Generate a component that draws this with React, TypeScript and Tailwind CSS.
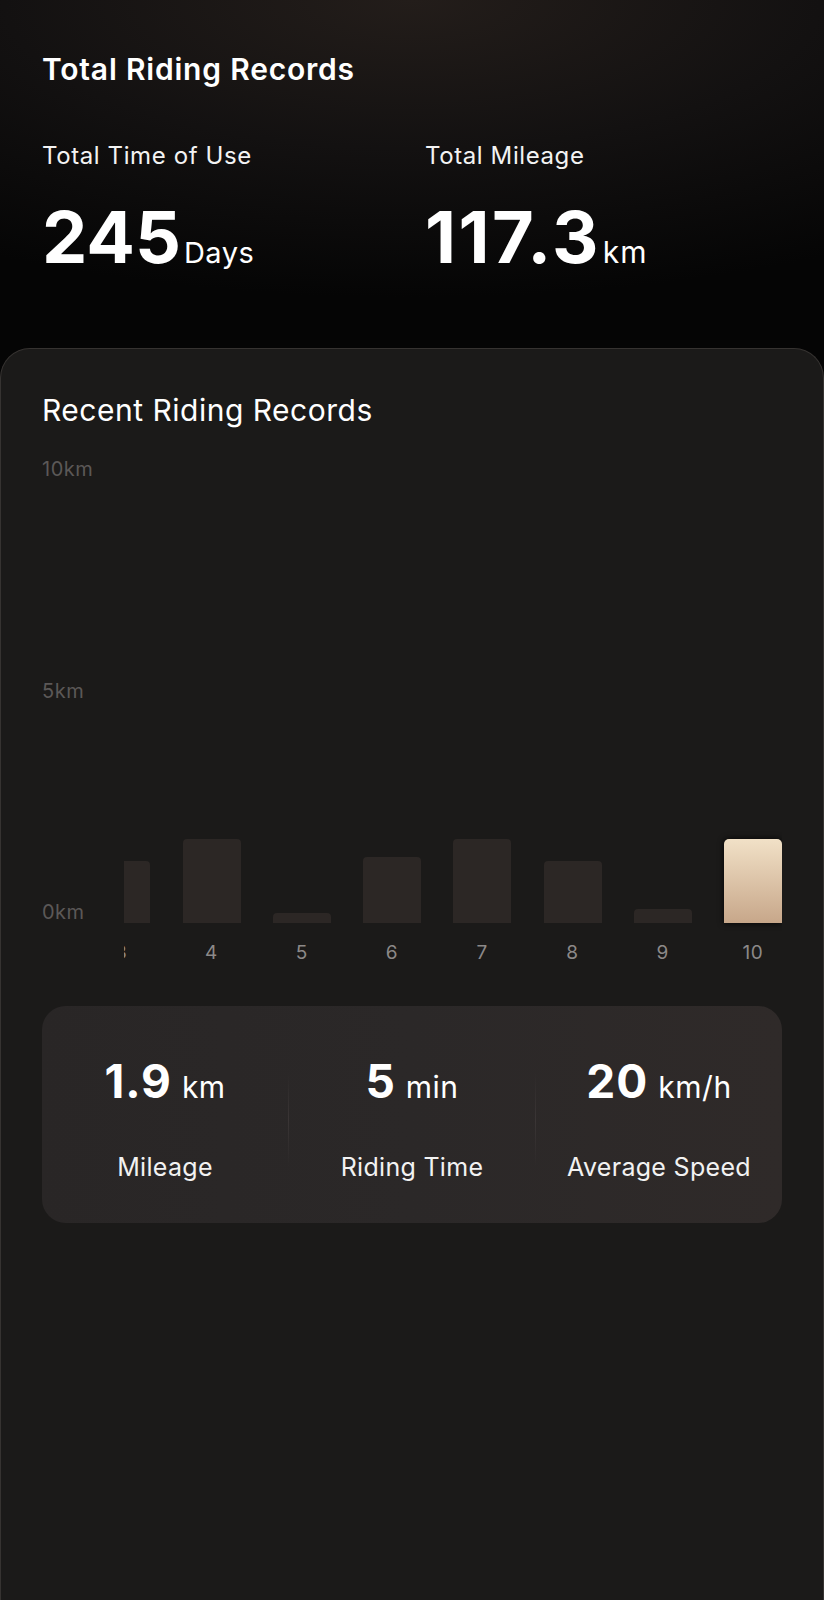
import React from "react";

type Bar = { day: number; km: number; active?: boolean };

const bars: Bar[] = [
  { day: 1, km: 1.2 },
  { day: 2, km: 0.8 },
  { day: 3, km: 1.4 },
  { day: 4, km: 1.9 },
  { day: 5, km: 0.22 },
  { day: 6, km: 1.5 },
  { day: 7, km: 1.9 },
  { day: 8, km: 1.4 },
  { day: 9, km: 0.32 },
  { day: 10, km: 1.9, active: true },
];

const PX_PER_KM = 44.3;

function Stat({ value, unit, label }: { value: string; unit: string; label: string }) {
  return (
    <div className="flex flex-1 flex-col items-center">
      <div className="flex items-baseline gap-[10px] text-white">
        <span className="text-[46px] font-bold leading-none tracking-[1px]">{value}</span>
        <span className="text-[30px] leading-none tracking-[0.5px]">{unit}</span>
      </div>
      <div className="mt-[48px] text-[25px] leading-[30px] tracking-[0.3px] text-[#f2f2f2]">{label}</div>
    </div>
  );
}

function Divider() {
  return <div className="h-[94px] w-px self-center bg-gradient-to-b from-transparent via-[#3a3535] to-transparent" />;
}

export default function App() {
  return (
    <div className="min-h-[1600px] bg-[#050505] font-['Inter',sans-serif] text-white">
      <section className="h-[348px] bg-[radial-gradient(110%_95%_at_50%_0%,#231d1a_0%,#131111_45%,#050505_90%)] px-[42px] pt-[51px]">
        <h1 className="text-[30px] font-semibold leading-[36px] tracking-[0.8px]">Total Riding Records</h1>
        <div className="mt-[54px] flex">
          <div className="w-[383px]">
            <div className="text-[24px] leading-[30px] tracking-[0.6px] text-[#f3f3f3]">Total Time of Use</div>
            <div className="mt-[30px] flex items-baseline">
              <span className="text-[72px] font-bold leading-[72px]">245</span>
              <span className="ml-[3px] text-[29px] leading-none tracking-[0.5px]">Days</span>
            </div>
          </div>
          <div>
            <div className="text-[24px] leading-[30px] tracking-[0.6px] text-[#f3f3f3]">Total Mileage</div>
            <div className="mt-[30px] flex items-baseline">
              <span className="text-[72px] font-bold leading-[72px] tracking-[2.4px]">117.3</span>
              <span className="ml-[2px] text-[30px] leading-none tracking-[1px]">km</span>
            </div>
          </div>
        </div>
      </section>

      <section className="min-h-[1252px] rounded-t-[30px] border border-b-0 border-[#363331] bg-[#1b1a19] px-[41px] pt-[44px]">
        <h2 className="text-[30px] leading-[34px] tracking-[0.5px] text-white">Recent Riding Records</h2>

        <div className="mt-[31px] flex">
          <div className="flex h-[465px] w-[82px] shrink-0 flex-col justify-between text-[20px] leading-[22px] tracking-[0.5px] text-[#5b5857]">
            <span>10km</span>
            <span>5km</span>
            <span>0km</span>
          </div>
          <div className="flex-1 overflow-hidden">
            <div className="flex justify-end gap-[32.25px]">
              {bars.map((b) => (
                <div key={b.day} className="flex w-[58px] shrink-0 flex-col items-center">
                  <div className="flex h-[465px] w-full items-end">
                    {b.active ? (
                      <div
                        className="w-full rounded-t-[5px] bg-gradient-to-b from-[#f1e1c7] to-[#c7a78a] shadow-[0_0_6px_rgba(0,0,0,0.9)]"
                        style={{ height: `${b.km * PX_PER_KM}px` }}
                      />
                    ) : (
                      <div
                        className="w-full rounded-t-[4px] bg-[#2c2725]"
                        style={{ height: `${b.km * PX_PER_KM}px` }}
                      />
                    )}
                  </div>
                  <span className="mt-[19px] text-[19px] leading-[22px] tracking-[0.6px] text-[#8c8988]">{b.day}</span>
                </div>
              ))}
            </div>
          </div>
        </div>

        <div className="mt-[42px] flex rounded-[24px] bg-gradient-to-r from-[#292626] via-[#2b2828] to-[#2f2a29] pt-[52px] pb-[41px]">
          <Stat value="1.9" unit="km" label="Mileage" />
          <Divider />
          <Stat value="5" unit="min" label="Riding Time" />
          <Divider />
          <Stat value="20" unit="km/h" label="Average Speed" />
        </div>
      </section>
    </div>
  );
}
